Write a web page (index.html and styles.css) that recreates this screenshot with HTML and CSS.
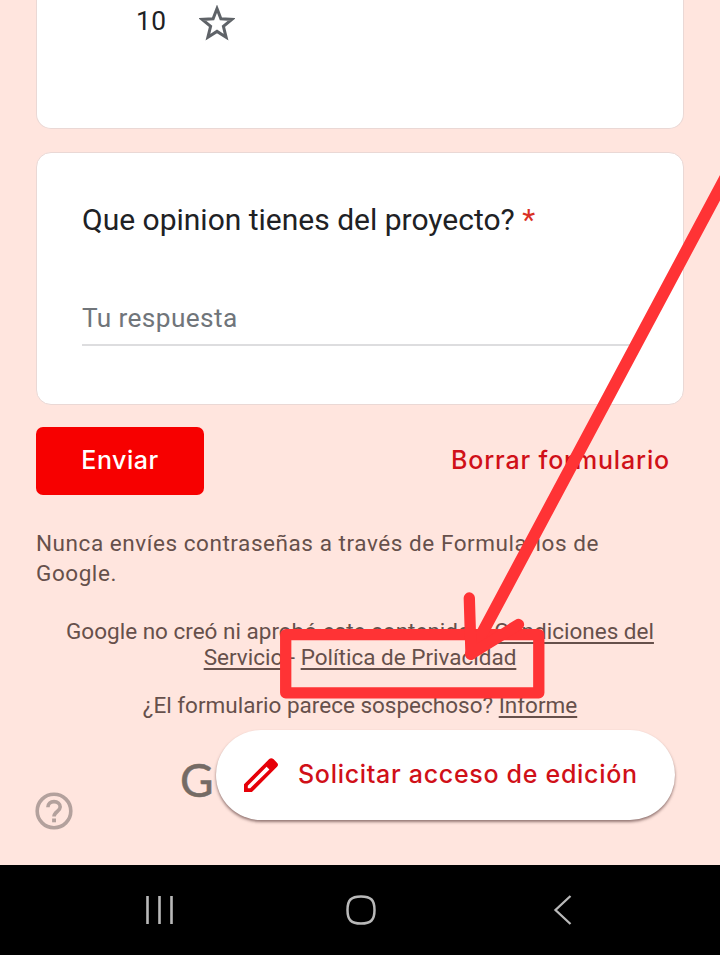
FILE: index.html
```html
<!DOCTYPE html>
<html lang="es">
<head>
<meta charset="utf-8">
<title>Formulario</title>
<link rel="stylesheet" href="styles.css">
</head>
<body>
<div class="screen">
  <main class="form">
    <section class="card rating">
      <span class="score">10</span>
      <svg class="star" width="36" height="36" viewBox="0 0 36 36"><path d="M18 3.6 21.9 13.7 32.8 14.4 24.4 21.3 27.1 32.3 18 26.4 8.9 32.3 11.6 21.3 3.2 14.4 14.1 13.7Z" fill="none" stroke="#5f6368" stroke-width="3"/></svg>
    </section>
    <section class="card question">
      <h2 class="title">Que opinion tienes del proyecto? <span class="required">*</span></h2>
      <div class="answer">Tu respuesta</div>
    </section>
    <div class="actions">
      <button class="send">Enviar</button>
      <button class="clear">Borrar formulario</button>
    </div>
    <p class="warning">Nunca envíes contraseñas a través de Formularios de Google.</p>
    <p class="legal">Google no creó ni aprobó este contenido. - <a>Condiciones del<br>Servicio</a> - <a>Política de Privacidad</a></p>
    <p class="legal report">¿El formulario parece sospechoso? <a>Informe</a></p>
    <div class="brand">Go</div>
  </main>
  <svg class="help" width="38" height="38" viewBox="0 0 38 38"><g fill="none" stroke="#b3a19d" stroke-width="3.6"><circle cx="19" cy="19" r="16.8"/><path d="M12.9 15.3C12.9 11.6 15.5 9.6 19 9.6S25.2 11.8 25.2 15.1C25.2 19.4 19 19.6 19 24.5"/></g><path d="M17.1 26.5h3.9v3.8h-3.9z" fill="#b3a19d"/></svg>
  <button class="edit">
    <svg width="36" height="36" viewBox="0 0 36 36"><path fill="#e60008" fill-rule="evenodd" d="M1 27.2 26.2 2.1Q28.2 .2 30.4 2.1L34 5.7Q36 7.7 34 9.8L8.9 35H1ZM4.8 28.8V31.2H7.2L26.4 12.6 23.6 9.8Z"/></svg>
    <span>Solicitar acceso de edición</span>
  </button>
  <nav class="navbar">
    <svg width="30" height="30" viewBox="0 0 30 30"><path d="M2.5 1v28M14.5 1v28M26.5 1v28" stroke="#b9b9b9" stroke-width="2.6"/></svg>
    <svg width="30" height="30" viewBox="0 0 30 30"><path d="M15 1.5C25 1.5 28.5 5 28.5 15S25 28.5 15 28.5 1.5 25 1.5 15 5 1.5 15 1.5Z" fill="none" stroke="#b9b9b9" stroke-width="2.5"/></svg>
    <svg width="30" height="30" viewBox="0 0 30 30"><path d="M22.5 1 7.5 15 22.5 29" fill="none" stroke="#b9b9b9" stroke-width="2.3"/></svg>
  </nav>
  <svg class="annotation" width="720" height="955" viewBox="0 0 720 955"><g fill="none" stroke="#ff3335" stroke-width="11.3" stroke-linecap="round" stroke-linejoin="round"><path d="M285.7 634.7H538.8V692.8H285.7Z"/><path d="M730 169 471 654" stroke-width="12"/><path d="M469.3 598 471 654 518.5 624.5"/></g></svg>
</div>
</body>
</html>
```

FILE: styles.css
```css
* { box-sizing: border-box; }
body { margin: 0; background: #ffe5de; font-family: Roboto, "Liberation Sans", sans-serif; }
h2, p { margin: 0; font-weight: 400; }
button { border: 0; margin: 0; padding: 0; background: none; font: 500 25px/34px Inter, sans-serif; letter-spacing: .7px; }
.screen { position: relative; width: 720px; height: 955px; overflow: hidden; display: flex; flex-direction: column; }
.form { flex: 1; min-height: 0; overflow: hidden; padding: 0 36px; display: flex; flex-direction: column; }
.card { flex: none; background: #fff; border: 1px solid #ead8d5; border-radius: 15px; }
.rating { height: 129px; border-top: 0; border-radius: 0 0 15px 15px; padding: 5px 0 0 99px; display: flex; align-items: flex-start; gap: 33px; }
.score { font-size: 26.25px; line-height: 32px; color: #202124; letter-spacing: .4px; }
.question { height: 253px; margin-top: 23px; padding: 47px 45px 0; }
.title { font-size: 30px; line-height: 40px; color: #202124; white-space: nowrap; }
.required { color: #d93025; }
.answer { margin-top: 58px; height: 48px; border-bottom: 2px solid #dddddf; font-size: 26.25px; line-height: 40px; color: #70757a; letter-spacing: .37px; }
.actions { flex: none; margin-top: 22px; height: 68px; display: flex; justify-content: space-between; align-items: center; padding-right: 14px; }
.send { width: 168px; height: 68px; padding-bottom: 2px; border-radius: 7px; background: #f70000; color: #fff; letter-spacing: .5px; }
.clear { padding-bottom: 2px; color: #d01018; letter-spacing: .85px; }
.warning { margin-top: 33px; font-size: 22.5px; line-height: 30px; letter-spacing: .56px; color: #66504b; }
.legal { margin-top: 30px; font-size: 22.5px; line-height: 26px; text-align: center; color: #66504b; white-space: nowrap; }
.legal a { text-decoration: underline; text-decoration-thickness: 2px; text-underline-offset: 3px; text-decoration-skip-ink: none; }
.report { margin-top: 22px; }
.brand { margin: 34px 0 0 144px; font: 400 46px/56px Lato, sans-serif; letter-spacing: 4px; color: #756b65; -webkit-text-stroke: .5px #756b65; }
.help { position: absolute; left: 35px; top: 792px; }
.edit { position: absolute; left: 216px; top: 730px; width: 459px; height: 90px; border-radius: 45px; background: #fff; color: #d01018; box-shadow: 0 2px 3px rgba(60, 30, 30, .55); display: flex; align-items: center; padding-left: 27px; gap: 19px; white-space: nowrap; }
.edit span { padding-bottom: 2px; }
.navbar { flex: none; height: 90px; background: #000; display: flex; align-items: center; justify-content: space-between; padding: 0 142px 0 145px; }
.navbar svg:nth-child(2) { margin-right: 2px; }
.annotation { position: absolute; left: 0; top: 0; pointer-events: none; }
```
